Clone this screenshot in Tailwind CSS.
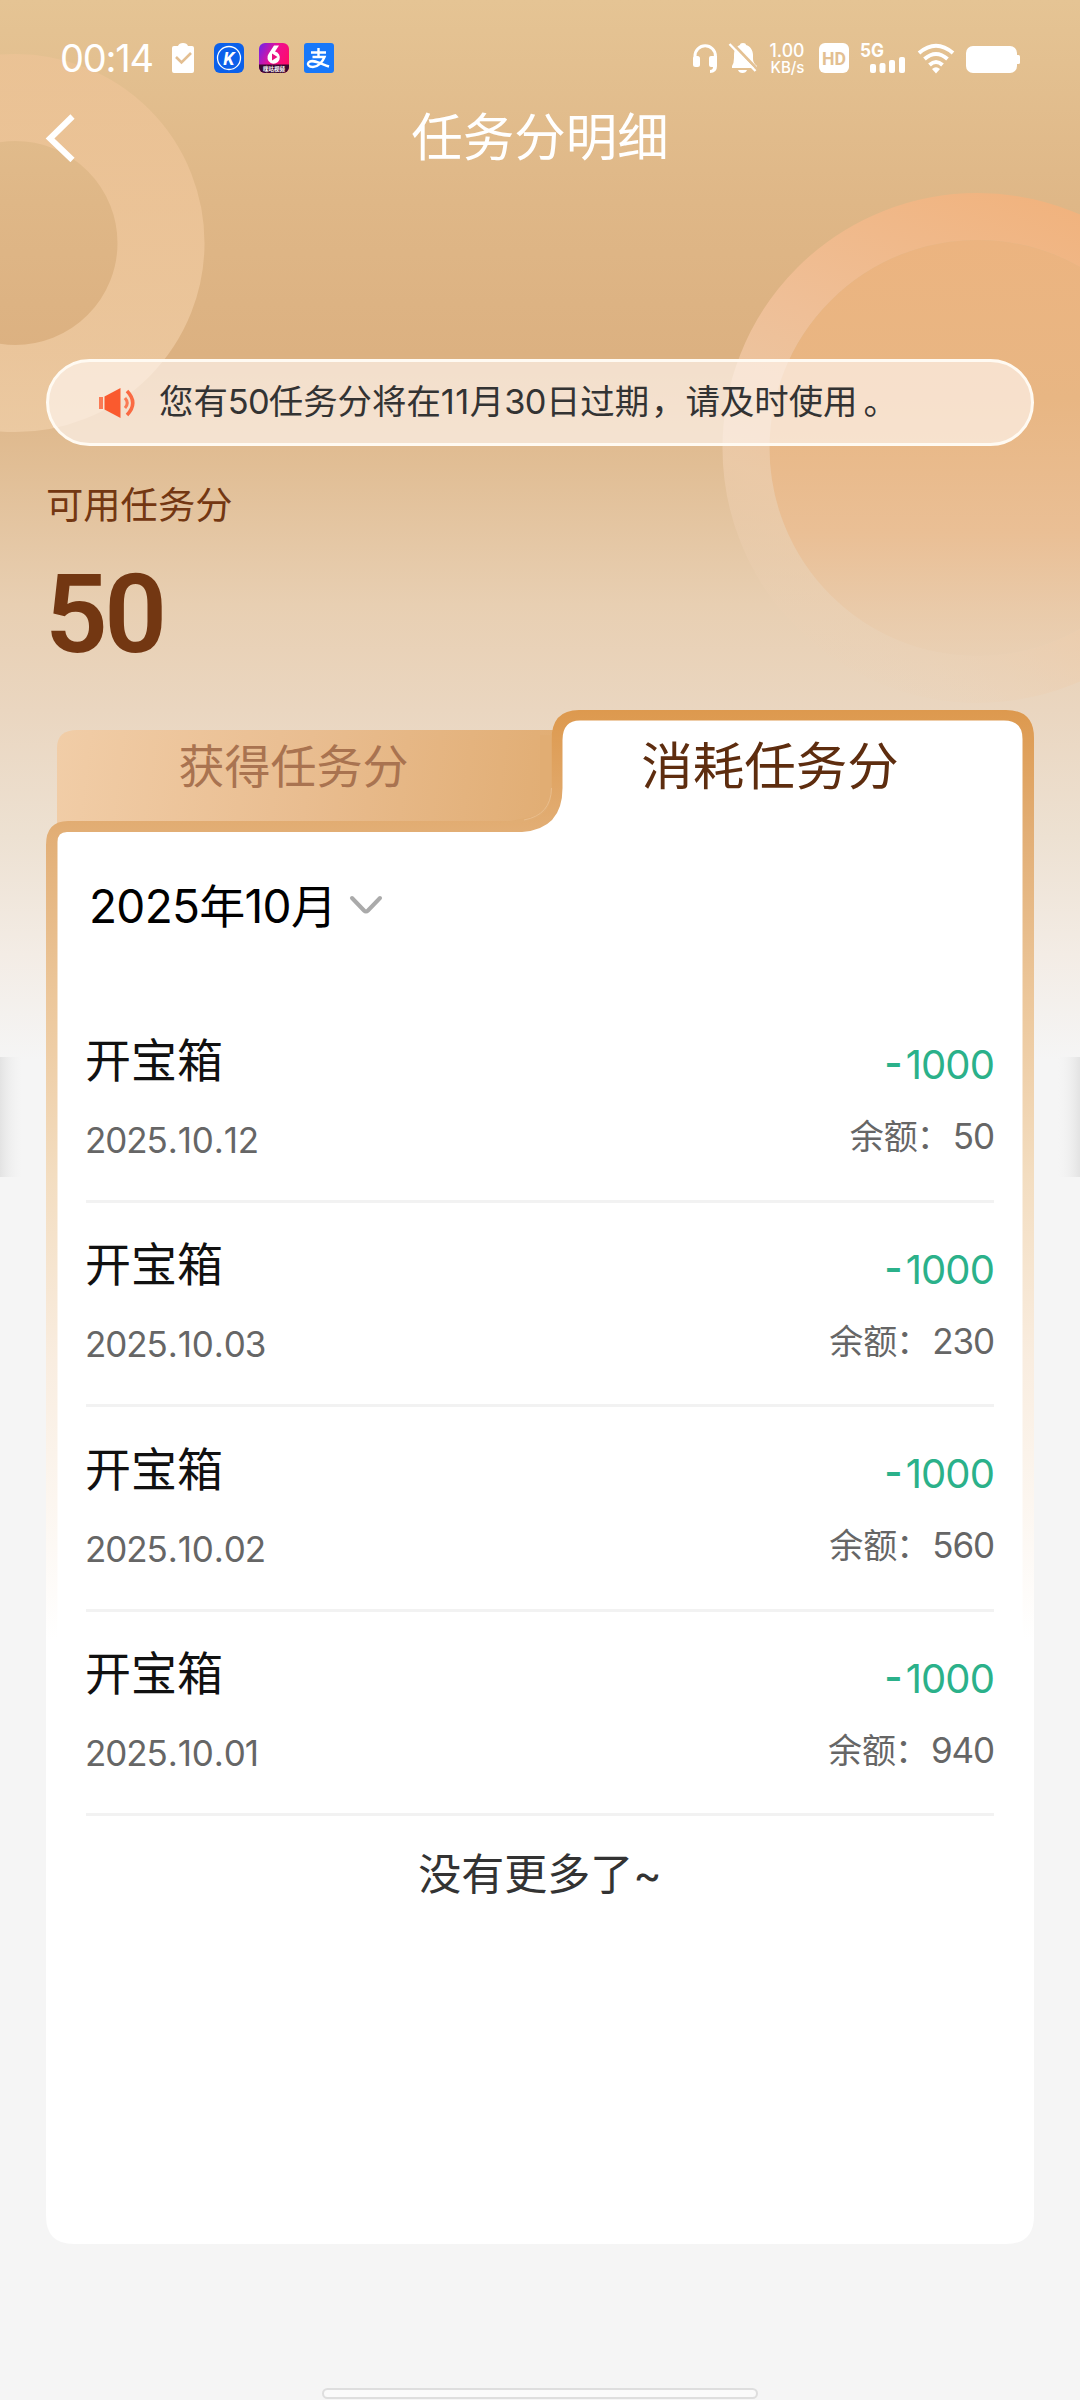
<!DOCTYPE html>
<html lang="zh-CN">
<head>
<meta charset="utf-8">
<title>任务分明细</title>
<script src="https://cdn.jsdelivr.net/npm/@tailwindcss/browser@4"></script>
</head>
<body class="bg-[#f5f5f5]">
<main class="relative h-[2400px] w-[1080px] overflow-hidden bg-[#f5f5f5] font-['Inter','Noto_Sans_CJK_SC',sans-serif]">

  <!-- page backdrop: gradient, rings, edge shadows, folder-shaped panel -->
  <svg class="absolute inset-0" width="1080" height="2400" viewBox="0 0 1080 2400" fill="none">
    <defs>
      <linearGradient id="bg" x1="0" y1="0" x2="0" y2="1060" gradientUnits="userSpaceOnUse">
        <stop offset="0" stop-color="#e5c494"/><stop offset=".19" stop-color="#dfb787"/><stop offset=".335" stop-color="#dcb181"/>
        <stop offset=".44" stop-color="#e1be95"/><stop offset=".57" stop-color="#e8cfb2"/><stop offset=".67" stop-color="#ead6c0"/>
        <stop offset=".79" stop-color="#ede1d2"/><stop offset=".9" stop-color="#f3ece5"/><stop offset="1" stop-color="#f5f5f5"/>
      </linearGradient>
      <linearGradient id="ringL" x1="0" y1="54" x2="0" y2="432" gradientUnits="userSpaceOnUse">
        <stop offset="0" stop-color="#efc498" stop-opacity=".6"/><stop offset=".4" stop-color="#efc79c" stop-opacity=".75"/><stop offset="1" stop-color="#eecda6" stop-opacity=".8"/>
      </linearGradient>
      <linearGradient id="ringR" x1="1080" y1="193" x2="850" y2="700" gradientUnits="userSpaceOnUse">
        <stop offset="0" stop-color="#f1b27c"/><stop offset=".4" stop-color="#efbf97"/><stop offset=".7" stop-color="#edccab" stop-opacity=".8"/><stop offset="1" stop-color="#ebd2b8" stop-opacity="0"/>
      </linearGradient>
      <linearGradient id="discR" x1="1000" y1="241" x2="1000" y2="690" gradientUnits="userSpaceOnUse">
        <stop offset="0" stop-color="#ecb480"/><stop offset=".35" stop-color="#e8b683"/><stop offset=".65" stop-color="#eabf95"/><stop offset="1" stop-color="#ead0b4" stop-opacity=".3"/>
      </linearGradient>
      <linearGradient id="shL"><stop offset="0" stop-color="#e3e3e3"/><stop offset="1" stop-color="#f5f5f5" stop-opacity="0"/></linearGradient>
      <linearGradient id="shR"><stop offset="0" stop-color="#f5f5f5" stop-opacity="0"/><stop offset="1" stop-color="#e3e3e3"/></linearGradient>
      <linearGradient id="tab" x1="57" y1="730" x2="562" y2="790" gradientUnits="userSpaceOnUse">
        <stop offset="0" stop-color="#f1cda7"/><stop offset=".5" stop-color="#e9bd90"/><stop offset="1" stop-color="#e1ad73"/>
      </linearGradient>
      <linearGradient id="edge" x1="0" y1="710" x2="0" y2="1640" gradientUnits="userSpaceOnUse">
        <stop offset="0" stop-color="#dd994e"/><stop offset=".13" stop-color="#e2ae75"/><stop offset=".31" stop-color="#ecc79b"/>
        <stop offset=".5" stop-color="#f3ddc0"/><stop offset=".7" stop-color="#f9ede0"/><stop offset="1" stop-color="#ffffff"/>
      </linearGradient>
    </defs>
    <rect width="1080" height="1060" fill="url(#bg)"/>
    <circle cx="15.500" cy="243" r="145.500" stroke="url(#ringL)" stroke-width="87"/>
    <circle cx="977.500" cy="448" r="208" fill="url(#discR)"/>
    <circle cx="977.500" cy="448" r="231.500" stroke="url(#ringR)" stroke-width="47"/>
    <rect y="1057" width="24" height="120" fill="url(#shL)"/>
    <rect x="1056" y="1057" width="24" height="120" fill="url(#shR)"/>
    <path d="M57 840V748Q57 730 77 730H562V840Z" fill="url(#tab)"/>
    <path d="M46 2216V845Q46 821 68 821H518Q551.500 821 551.500 790V740Q551.500 710 579 710H1006Q1034 710 1034 738V2216Q1034 2244 1006 2244H74Q46 2244 46 2216Z" fill="url(#edge)"/>
    <path d="M500 823H519Q551.500 821 551.500 786V735H540V815Z" fill="#e1ad73"/>
    <path d="M524 820Q551 815 551.500 788" stroke="#e9bd8c" stroke-width="1"/>
    <path d="M57.500 2230V842Q57.500 832 67 832H522Q562.500 829 562.500 788V740Q562.500 720.500 580 720.500H1004Q1022.500 720.500 1022.500 739V2230Z" fill="#fff"/>
  </svg>

  <div class="relative flex h-full flex-col">
    <!-- status bar -->
    <header class="flex h-[76px] items-end justify-between pl-[60px] pr-[60px] text-white">
      <div class="flex items-center pb-[3px]">
        <span class="w-[112px] text-[38px] font-normal leading-[30px] tracking-[-1.200px]">00:14</span>
        <svg width="22" height="30" viewBox="0 0 22 30"><path d="M2 3H6Q7 0 11 0T16 3H20Q22 3 22 5V28Q22 30 20 30H2Q0 30 0 28V5Q0 3 2 3Z" fill="#fff"/><path d="M4 14L9.500 19.500L19 10" fill="none" stroke="#e3bf92" stroke-width="2.600"/></svg>
        <svg class="ml-[20px]" width="30" height="30" viewBox="0 0 30 30"><rect width="30" height="30" rx="6" fill="#0b60ea"/><circle cx="15" cy="15" r="11.500" fill="none" stroke="#fff" stroke-width="1.300"/><text x="14.700" y="21.500" text-anchor="middle" font-family="Roboto" font-weight="700" font-style="italic" font-size="18" fill="#fff">K</text></svg>
        <svg class="ml-[15px]" width="30" height="30" viewBox="0 0 30 30"><defs><linearGradient id="six" x1="0" y1="0" x2="1" y2=".5"><stop offset="0" stop-color="#6a24ee"/><stop offset=".55" stop-color="#ee0f92"/><stop offset="1" stop-color="#ff0a6c"/></linearGradient><clipPath id="c6"><rect width="30" height="30" rx="6"/></clipPath></defs><g clip-path="url(#c6)"><rect width="30" height="30" fill="url(#six)"/><path d="M0 21.500H30V30H0Z" fill="#3a0830"/></g><path d="M15 2.500H20L16 8.500A6.200 6.200 0 1 1 9.500 11Z" fill="#fff"/><path d="M13 10.500L18.500 14L13 17.500Z" fill="#e8107f"/><text x="15" y="28" text-anchor="middle" font-family="Noto Sans CJK SC" font-weight="700" font-size="5.500" fill="#fff">咪咕视频</text></svg>
        <svg class="ml-[15px]" width="30" height="30" viewBox="0 0 30 30"><rect width="30" height="30" rx="3" fill="#1878fa"/><path d="M7 9.500H22M14.500 5V14M8.500 14H20.500C18.500 19 14 24 9 24C4.500 24 3 21.500 4.500 19.500C8 15.500 16 20.500 25 23.500" fill="none" stroke="#fff" stroke-width="2.400"/></svg>
      </div>
      <svg width="330" height="46" viewBox="690 30 330 46" fill="#fff">
        <path d="M695 60V56A10.200 10.200 0 0 1 715.400 56V60" fill="none" stroke="#fff" stroke-width="3"/>
        <rect x="693" y="56" width="7" height="11" rx="2.500"/><path d="M709 58Q709 56 711 56H717V66Q717 73 710 73V70Q713 70 713 67H711Q709 67 709 65Z"/>
        <path d="M732 66Q734 63 734 58V55C734 49 737 46 740 45Q740 43 743 43T746 45C750 46 753 50 753 55V59Q753 63 757 66V68H732ZM738 70H747Q746 73 742.500 73T738 70Z"/>
        <path d="M731.500 42.500L757 69" stroke="#e4c193" stroke-width="3"/><path d="M729.500 44L755.500 71" stroke="#fff" stroke-width="2.400"/>
        <text x="787" y="57" text-anchor="middle" font-family="Inter" font-size="18" font-weight="500" textLength="35" lengthAdjust="spacingAndGlyphs">1.00</text>
        <text x="787.500" y="72.500" text-anchor="middle" font-family="Inter" font-size="16" font-weight="500" textLength="34" lengthAdjust="spacingAndGlyphs">KB/s</text>
        <rect x="819" y="43" width="30" height="30" rx="6"/>
        <text x="834" y="65" text-anchor="middle" font-family="Roboto" font-size="19" font-weight="700" fill="#e3bf92" textLength="24" lengthAdjust="spacingAndGlyphs">HD</text>
        <text x="860" y="57" font-family="Inter" font-size="19" font-weight="700" textLength="24" lengthAdjust="spacingAndGlyphs">5G</text>
        <rect x="870" y="64" width="6" height="9" rx="2"/><rect x="879.500" y="63" width="6" height="10" rx="2"/><rect x="889" y="60" width="6" height="13" rx="2"/><rect x="899" y="57" width="6" height="16" rx="2"/>
        <g fill="none" stroke="#fff" stroke-width="4"><path d="M919 53Q936 38.500 953 53"/><path d="M924.500 59Q936 49 947.500 59"/><path d="M929.500 65Q936 59 942.500 65"/></g><path d="M932 69Q936 65.500 940 69L936 73.500Z"/>
        <rect x="966" y="46" width="51" height="27" rx="7"/><rect x="1014" y="55" width="6" height="9" rx="1.500"/>
      </svg>
    </header>

    <!-- title bar -->
    <div class="relative flex h-[124px] items-center justify-center text-white">
      <svg class="absolute left-[44px] top-[38px]" width="34" height="48" viewBox="0 0 34 48"><path d="M28.500 2.500L6 24.500L28.500 46" fill="none" stroke="#fff" stroke-width="6"/></svg>
      <h1 class="text-[51.500px] leading-none">任务分明细</h1>
    </div>

    <!-- expiry notice -->
    <div class="ml-[46px] mt-[159px] flex h-[87px] w-[988px] items-center rounded-full border-[3px] border-[#fffaf2] bg-[#fff8f2]/65 pl-[50px]">
      <svg width="38" height="32" viewBox="0 0 38 32"><rect x="0" y="10" width="4" height="12" fill="#fa7a55"/><path d="M5.500 9.500L21.500 1V31L5.500 22.500Z" fill="#fa5a2e"/><path d="M26 11Q30.500 16 26 21" fill="none" stroke="#fa7a55" stroke-width="3"/><path d="M28 4Q39.500 16 28 28" fill="none" stroke="#fa6a42" stroke-width="3.500"/></svg>
      <p class="ml-[22px] whitespace-nowrap text-[34.400px] leading-none text-[#333]">您有<span class="tracking-[-.8px]">50</span>任务分将在<span class="tracking-[.5px]">11</span>月<span class="tracking-[-.6px]">30</span>日过期<span class="ml-[2px]">，</span>请及时使用<span class="ml-[6px]">。</span></p>
    </div>

    <!-- balance -->
    <section class="ml-[46px] mt-[41px] text-[#733712]">
      <p class="text-[37.300px] leading-[38px]">可用任务分</p>
      <p class="-ml-px mt-[35px] font-['Roboto'] text-[110px] font-semibold leading-[110px] tracking-[-3.500px]">50</p>
    </section>

    <!-- tabs -->
    <nav class="mt-[40px] flex h-[122px] pl-[57px] leading-none">
      <div class="flex w-[473px] justify-center pt-[33px] text-[46px] text-[#a97350]">获得任务分</div>
      <div class="flex w-[480px] justify-center pt-[31px] text-[51.500px] text-[#5e2d0f]">消耗任务分</div>
    </nav>

    <!-- month picker -->
    <div class="flex h-[148px] items-center pl-[89px]">
      <span class="text-[46px] leading-none tracking-[-.7px] text-black">2025年10月</span>
      <svg class="ml-[13px]" width="34" height="22" viewBox="0 0 34 22"><path d="M3 3L15 15.500Q17 17.500 19 15.500L31 3" fill="none" stroke="#aaa" stroke-width="4" stroke-linecap="round"/></svg>
    </div>

    <ul id="records" class="mt-[18px] px-[86px]"></ul>
    <p class="mt-[36px] text-center text-[43px] leading-[44px] text-[#333]">没有更多了~</p>
  </div>

  <div class="absolute bottom-[1px] left-[322px] h-[11px] w-[436px] rounded-full border-2 border-[#dedede] bg-[#fafafa]"></div>
</main>
<script>
  const records = [['2025.10.12', 50], ['2025.10.03', 230], ['2025.10.02', 560], ['2025.10.01', 940]];
  const dot = '<span class="ml-[1px] mr-[1px]">.</span>';
  const one = '<span class="tracking-[-.2px]">1</span>';
  document.getElementById('records').innerHTML = records.map(([date, left]) => `
    <li class="flex h-[204.600px] justify-between border-b-[3px] border-[#f2f2f2] leading-none">
      <div class="-ml-px flex flex-col pt-[38.500px]">
        <span class="text-[46px] text-[#111]">开宝箱</span>
        <span class="mt-[40px] text-[35px] tracking-[-1.100px] text-[#666]">${date.split('.').map(p => p.replace(/^1(?=\d)/, one)).join(dot)}</span>
      </div>
      <div class="flex flex-col items-end pt-[47px]">
        <span class="text-[40px] tracking-[-.9px] text-[#2bb18a]"><span class="mr-[4px] inline-block -translate-y-[2px] scale-y-125">-</span>1000</span>
        <span class="mt-[34px] text-[34px] text-[#666]">余额<span class="-ml-px mr-[2px]">：</span><span class="text-[35px] tracking-[-1.100px]">${left}</span></span>
      </div>
    </li>`).join('');
</script>
</body>
</html>
